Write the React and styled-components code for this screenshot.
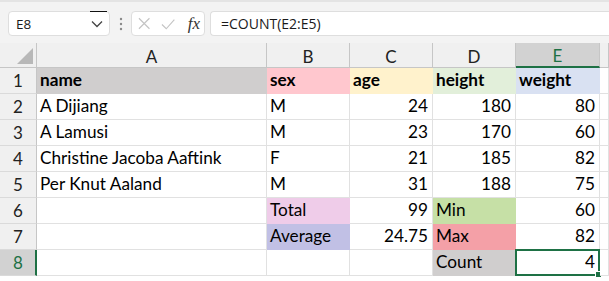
import React from 'react';
import styled, { createGlobalStyle } from 'styled-components';

const GlobalStyle = createGlobalStyle`
  html, body {
    margin: 0;
    padding: 0;
    background: #ffffff;
  }
`;

const GREEN = '#1e7145';
const GRID = '#e1e1e1';
const HEAD_LINE = '#c6c6c6';

const columns = ['A', 'B', 'C', 'D', 'E', ''];

const rows = [
  {
    n: 1,
    bold: true,
    cells: [
      { v: 'name', bg: '#d0cece' },
      { v: 'sex', bg: '#ffc7ce' },
      { v: 'age', bg: '#fff2cc' },
      { v: 'height', bg: '#e2efda' },
      { v: 'weight', bg: '#d9e1f2' },
    ],
  },
  { n: 2, cells: [{ v: 'A Dijiang' }, { v: 'M' }, { v: 24, num: true }, { v: 180, num: true }, { v: 80, num: true }] },
  { n: 3, cells: [{ v: 'A Lamusi' }, { v: 'M' }, { v: 23, num: true }, { v: 170, num: true }, { v: 60, num: true }] },
  { n: 4, cells: [{ v: 'Christine Jacoba Aaftink' }, { v: 'F' }, { v: 21, num: true }, { v: 185, num: true }, { v: 82, num: true }] },
  { n: 5, cells: [{ v: 'Per Knut Aaland' }, { v: 'M' }, { v: 31, num: true }, { v: 188, num: true }, { v: 75, num: true }] },
  { n: 6, cells: [{ v: '' }, { v: 'Total', bg: '#efcce9' }, { v: 99, num: true }, { v: 'Min', bg: '#c6e0a6' }, { v: 60, num: true }] },
  { n: 7, cells: [{ v: '' }, { v: 'Average', bg: '#c1c0e5' }, { v: '24.75', num: true }, { v: 'Max', bg: '#f4a0a7' }, { v: 82, num: true }] },
  { n: 8, active: true, cells: [{ v: '' }, { v: '' }, { v: '' }, { v: 'Count', bg: '#d0cece' }, { v: 4, num: true, selected: true }] },
];

const Frame = styled.div`
  width: 609px;
  height: 281px;
  overflow: hidden;
  background: #ffffff;
  font-family: Lato, "Liberation Sans", sans-serif;
`;

const Toolbar = styled.div`
  height: 43px;
  box-sizing: border-box;
  background: #f3f3f3;
  border-top: 2px solid #e4e4e4;
  padding: 9px 0 0 8px;
  display: flex;
  align-items: flex-start;
`;

const Field = styled.div`
  height: 25px;
  box-sizing: border-box;
  background: #ffffff;
  border: 1px solid #dedede;
  border-radius: 4px;
  display: flex;
  align-items: center;
  position: relative;
  font-family: "Open Sans", "Liberation Sans", sans-serif;
  font-size: 13.5px;
  color: #1a1a1a;
`;

const NameBox = styled(Field)`
  width: 102px;
  padding: 0 6px 0 7px;
  justify-content: space-between;
  &::after {
    content: '';
    position: absolute;
    top: -1px;
    right: 2px;
    width: 17px;
    height: 1px;
    background: #111;
  }
`;

const Dots = styled.div`
  width: 21px;
  height: 25px;
  display: flex;
  align-items: center;
  justify-content: center;
`;

const FnBox = styled(Field)`
  width: 74px;
  padding: 0 4px 0 6px;
  gap: 11px;
`;

const Fx = styled.span`
  font-family: "Liberation Serif", serif;
  font-style: italic;
  font-size: 17px;
  color: #333;
  margin-left: 1px;
`;

const Formula = styled(Field)`
  flex: 1;
  margin-left: 5px;
  padding-left: 10px;
  border-right: none;
  border-radius: 4px 0 0 4px;
  font-size: 14px;
`;

const Sheet = styled.div`
  display: grid;
  grid-template-columns: 37px 230px 83px 83px 83px 84px 1fr;
  grid-auto-rows: 26px;
  grid-template-rows: 25px;
`;

const Corner = styled.div`
  background: #f0f0f0;
  border-right: 1px solid ${HEAD_LINE};
  border-bottom: 1px solid ${HEAD_LINE};
  position: relative;
  &::after {
    content: '';
    position: absolute;
    right: 3px;
    bottom: 3px;
    border-style: solid;
    border-width: 0 0 16px 16px;
    border-color: transparent transparent #b8b8b8 transparent;
  }
`;

const ColHead = styled.div`
  background: ${(p) => (p.$active ? '#d2d2d2' : '#f0f0f0')};
  color: ${(p) => (p.$active ? GREEN : '#222')};
  border-right: 1px solid ${HEAD_LINE};
  border-bottom: ${(p) => (p.$active ? `2px solid ${GREEN}` : `1px solid ${HEAD_LINE}`)};
  display: flex;
  align-items: center;
  justify-content: center;
  font-size: 17px;
  padding-top: 2px;
`;

const RowHead = styled.div`
  background: ${(p) => (p.$active ? '#d2d2d2' : '#f0f0f0')};
  color: ${(p) => (p.$active ? GREEN : '#222')};
  border-bottom: 1px solid #dadada;
  border-right: ${(p) => (p.$active ? `2px solid ${GREEN}` : `1px solid ${HEAD_LINE}`)};
  display: flex;
  align-items: center;
  justify-content: center;
  font-size: 17px;
  padding-left: ${(p) => (p.$active ? '1px' : '0')};
`;

const Cell = styled.div`
  background: ${(p) => p.$bg || '#ffffff'};
  border-right: 1px solid ${(p) => p.$bg || GRID};
  border-bottom: 1px solid ${(p) => p.$bg || GRID};
  display: flex;
  align-items: flex-end;
  justify-content: ${(p) => (p.$num ? 'flex-end' : 'flex-start')};
  padding: 0 4px 3px 3px;
  font-size: 17.2px;
  line-height: 20px;
  font-weight: ${(p) => (p.$bold ? 700 : 400)};
  color: #000;
  white-space: nowrap;
  overflow: visible;
  position: relative;
`;

const Selection = styled.div`
  position: absolute;
  left: -1px;
  top: -1px;
  right: -1px;
  bottom: -1px;
  border: 2px solid ${GREEN};
  pointer-events: none;
  &::after {
    content: '';
    position: absolute;
    right: -4px;
    bottom: -4px;
    width: 5px;
    height: 5px;
    background: ${GREEN};
    border: 1px solid #ffffff;
  }
`;

const ChevronDown = () => (
  <svg width="12" height="8" viewBox="0 0 12 8">
    <path d="M1 1.5 L6 6.5 L11 1.5" fill="none" stroke="#444" strokeWidth="1.3" />
  </svg>
);

const VDots = () => (
  <svg width="4" height="14" viewBox="0 0 4 14">
    <circle cx="2" cy="2" r="1.2" fill="#8a8a8a" />
    <circle cx="2" cy="7" r="1.2" fill="#8a8a8a" />
    <circle cx="2" cy="12" r="1.2" fill="#8a8a8a" />
  </svg>
);

const Cross = () => (
  <svg width="13" height="13" viewBox="0 0 13 13">
    <path d="M1 1 L12 12 M12 1 L1 12" stroke="#c4c4c4" strokeWidth="1.2" fill="none" />
  </svg>
);

const Check = () => (
  <svg width="15" height="12" viewBox="0 0 15 12">
    <path d="M1 6.5 L5.5 11 L14 1.5" stroke="#c4c4c4" strokeWidth="1.2" fill="none" />
  </svg>
);

export default function App() {
  return (
    <Frame>
      <GlobalStyle />
      <Toolbar>
        <NameBox>
          <span>E8</span>
          <ChevronDown />
        </NameBox>
        <Dots>
          <VDots />
        </Dots>
        <FnBox>
          <Cross />
          <Check />
          <Fx>fx</Fx>
        </FnBox>
        <Formula>=COUNT(E2:E5)</Formula>
      </Toolbar>
      <Sheet>
        <Corner />
        {columns.map((c, i) => (
          <ColHead key={i} $active={c === 'E'}>
            {c}
          </ColHead>
        ))}
        {rows.map((r) => (
          <React.Fragment key={r.n}>
            <RowHead $active={r.active}>{r.n}</RowHead>
            {r.cells.map((c, i) => (
              <Cell key={i} $bg={c.bg} $num={c.num} $bold={r.bold}>
                {c.v}
                {c.selected && <Selection />}
              </Cell>
            ))}
            <Cell />
          </React.Fragment>
        ))}
      </Sheet>
    </Frame>
  );
}
